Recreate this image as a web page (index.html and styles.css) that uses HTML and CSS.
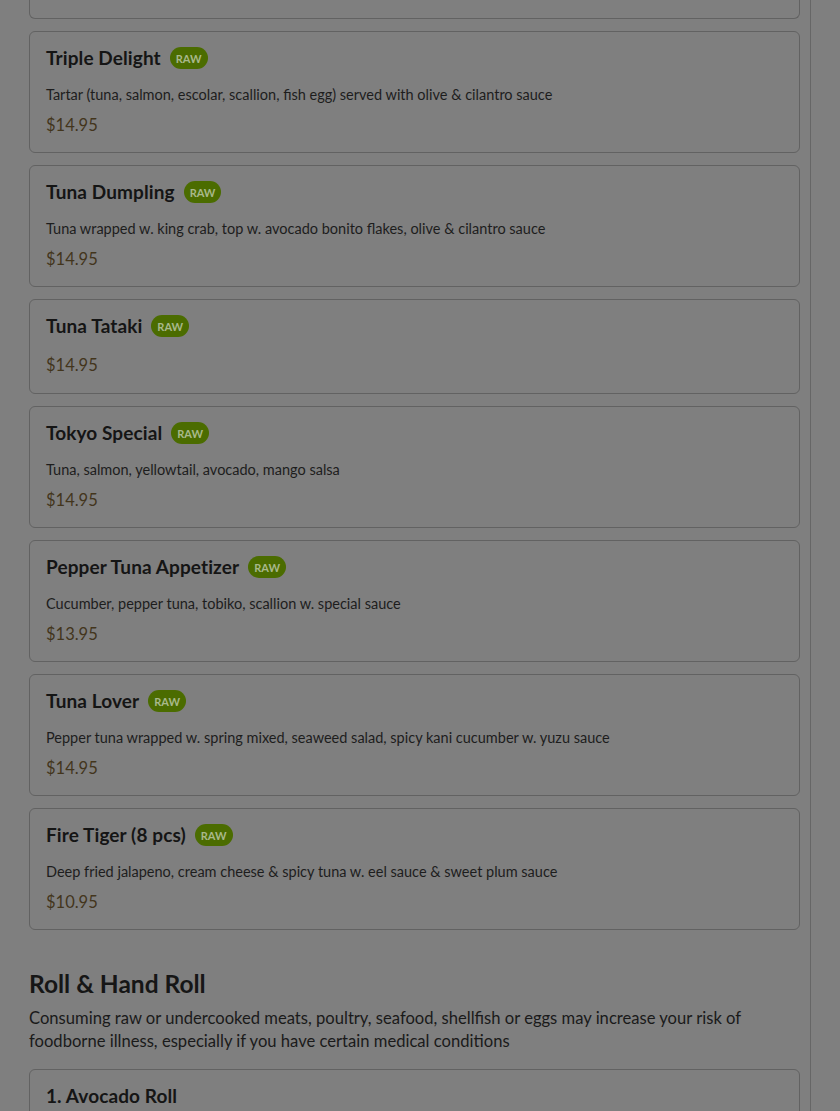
FILE: index.html
```html
<!DOCTYPE html>
<html lang="en">
<head>
<meta charset="utf-8">
<title>Menu</title>
<link rel="stylesheet" href="styles.css">
</head>
<body>
<main class="page">
  <div class="card card-tail"></div>

  <div class="card">
    <div class="title-row"><h3 class="item-name">Triple Delight</h3><span class="badge">RAW</span></div>
    <p class="desc">Tartar (tuna, salmon, escolar, scallion, fish egg) served with olive &amp; cilantro sauce</p>
    <p class="price">$14.95</p>
  </div>

  <div class="card">
    <div class="title-row"><h3 class="item-name">Tuna Dumpling</h3><span class="badge">RAW</span></div>
    <p class="desc">Tuna wrapped w. king crab, top w. avocado bonito flakes, olive &amp; cilantro sauce</p>
    <p class="price">$14.95</p>
  </div>

  <div class="card card-nodesc">
    <div class="title-row"><h3 class="item-name">Tuna Tataki</h3><span class="badge">RAW</span></div>
    <p class="price price-solo">$14.95</p>
  </div>

  <div class="card">
    <div class="title-row"><h3 class="item-name">Tokyo Special</h3><span class="badge">RAW</span></div>
    <p class="desc">Tuna, salmon, yellowtail, avocado, mango salsa</p>
    <p class="price">$14.95</p>
  </div>

  <div class="card">
    <div class="title-row"><h3 class="item-name">Pepper Tuna Appetizer</h3><span class="badge">RAW</span></div>
    <p class="desc">Cucumber, pepper tuna, tobiko, scallion w. special sauce</p>
    <p class="price">$13.95</p>
  </div>

  <div class="card">
    <div class="title-row"><h3 class="item-name">Tuna Lover</h3><span class="badge">RAW</span></div>
    <p class="desc">Pepper tuna wrapped w. spring mixed, seaweed salad, spicy kani cucumber w. yuzu sauce</p>
    <p class="price">$14.95</p>
  </div>

  <div class="card">
    <div class="title-row"><h3 class="item-name">Fire Tiger (8 pcs)</h3><span class="badge">RAW</span></div>
    <p class="desc">Deep fried jalapeno, cream cheese &amp; spicy tuna w. eel sauce &amp; sweet plum sauce</p>
    <p class="price">$10.95</p>
  </div>

  <section class="section">
    <h2 class="section-title">Roll &amp; Hand Roll</h2>
    <p class="section-note">Consuming raw or undercooked meats, poultry, seafood, shellfish or eggs may increase your risk of foodborne illness, especially if you have certain medical conditions</p>
  </section>

  <div class="card">
    <div class="title-row"><h3 class="item-name">1. Avocado Roll</h3></div>
    <p class="desc">Avocado</p>
    <p class="price">$5.95</p>
  </div>
</main>
</body>
</html>
```

FILE: styles.css
```css
html, body {
  margin: 0;
  padding: 0;
  background: #7f7f7f;
  height: 1111px;
  overflow: hidden;
}

body {
  font-family: Lato, "Noto Sans", sans-serif;
  color: #161616;
}

.page {
  width: 771px;
  padding: 0 10px 0 29px;
  border-right: 1px solid #666666;
  min-height: 1111px;
  display: flex;
  flex-direction: column;
  gap: 12px;
}

.card {
  border: 1px solid #626262;
  border-radius: 6px;
  padding: 15px 16px 15px;
  background: #7f7f7f;
  flex-shrink: 0;
}

.card-nodesc {
  padding-bottom: 16px;
}

.card-tail {
  height: 19px;
  padding: 0;
  box-sizing: border-box;
  border-top: none;
  border-radius: 0 0 6px 6px;
}

.title-row {
  display: flex;
  align-items: center;
  gap: 9px;
  height: 22px;
}

.item-name {
  margin: 0;
  font-size: 19px;
  font-weight: 700;
  line-height: 22px;
  color: #151515;
  letter-spacing: 0.1px;
}

.badge {
  display: inline-flex;
  align-items: center;
  height: 22px;
  padding: 0 6px;
  border-radius: 11px;
  background: #4b6c00;
  color: #a8b88a;
  font-size: 11px;
  font-weight: 700;
}

.desc {
  margin: 16px 0 0;
  font-size: 14.5px;
  line-height: 20px;
  color: #1d1d1d;
}

.price {
  margin: 8px 0 0;
  font-size: 16.5px;
  line-height: 24px;
  color: #43351c;
}

.price-solo {
  margin-top: 16px;
}

.section {
  margin-top: 27px;
  margin-bottom: 4px;
}

.section-title {
  margin: 0;
  font-size: 24.5px;
  line-height: 30px;
  font-weight: 700;
  color: #161616;
}

.section-note {
  margin: 8px 0 0;
  font-size: 16.6px;
  line-height: 23px;
  color: #1a1a1a;
  padding-right: 40px;
}
```
